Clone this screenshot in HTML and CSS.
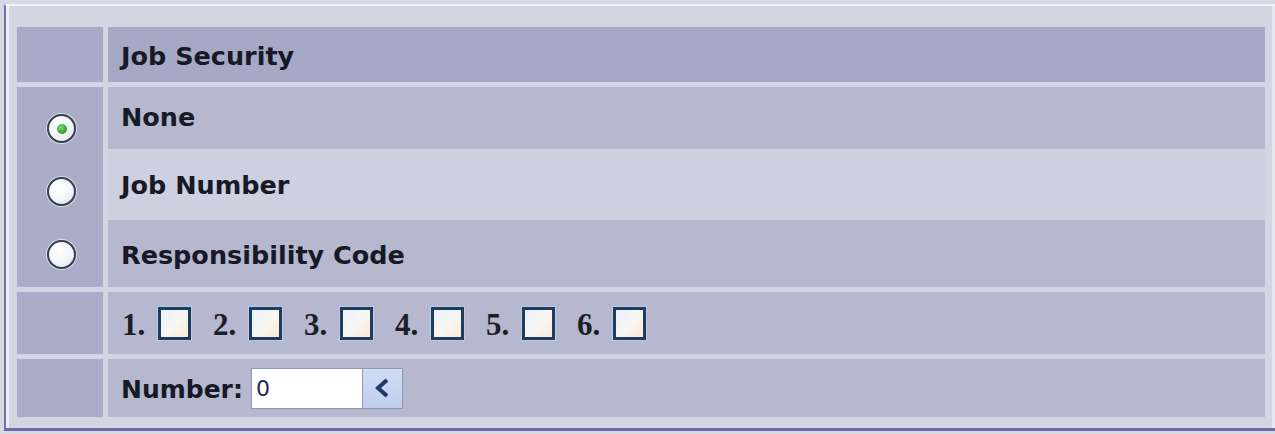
FILE: index.html
```html
<!DOCTYPE html>
<html>
<head>
<meta charset="utf-8">
<link rel="stylesheet" href="styles.css">
</head>
<body>
<div class="panel">
  <div class="grid">
    <div class="lc hdr-l"></div>
    <div class="rc hdr">Job Security</div>

    <div class="lc radios">
      <span class="radio checked"></span>
      <span class="radio"></span>
      <span class="radio"></span>
    </div>
    <div class="opts">
      <div class="opt dark r1">None</div>
      <div class="opt light r2">Job Number</div>
      <div class="opt dark r3">Responsibility Code</div>
    </div>

    <div class="lc"></div>
    <div class="rc boxes">
      <span class="item"><span class="num">1.</span><span class="box"></span></span>
      <span class="item"><span class="num">2.</span><span class="box"></span></span>
      <span class="item"><span class="num">3.</span><span class="box"></span></span>
      <span class="item"><span class="num">4.</span><span class="box"></span></span>
      <span class="item"><span class="num">5.</span><span class="box"></span></span>
      <span class="item"><span class="num">6.</span><span class="box"></span></span>
    </div>

    <div class="lc"></div>
    <div class="rc numrow">
      <span class="label">Number:</span>
      <span class="spin">
        <span class="field">0</span>
        <span class="btn"><svg width="20" height="22" viewBox="0 0 20 22"><polyline points="15,3 6,11 15,19" fill="none" stroke="#1f3a66" stroke-width="4" stroke-linejoin="miter"/></svg></span>
      </span>
    </div>
  </div>
</div>
</body>
</html>
```

FILE: styles.css
```css
html, body {
  margin: 0;
  padding: 0;
}
body {
  background: #d7d8e3;
  width: 1275px;
  height: 434px;
  overflow: hidden;
  font-family: "DejaVu Sans", Verdana, sans-serif;
  font-weight: bold;
  color: #181926;
}
.panel {
  margin: 4px 0 0 4px;
  border-top: 2px solid #f3f4fa;
  border-left: 2px solid #6d6db0;
  border-bottom: 3px solid #6a6ca6;
  box-shadow: inset 3px 0 0 #eef0f8, inset -3px 0 0 #e6e8f1;
  background: #d3d6e2;
  padding: 21px 10px 11px 11px;
  height: 390px;
}
.grid {
  display: grid;
  grid-template-columns: 86px 1fr;
  grid-template-rows: 55px 200px 62px 58px;
  gap: 5px;
}
.lc {
  background: #aaadc8;
}
.hdr-l {
  background: #a8abc7;
}
.rc {
  background: #b5b8ce;
  display: flex;
  align-items: center;
  padding-left: 13px;
  font-size: 25.5px;
}
.hdr {
  background: #a6a9c6;
  padding-top: 2px;
}
.radios {
  display: flex;
  flex-direction: column;
  align-items: center;
  padding-top: 27px;
  gap: 34px;
  padding-left: 3px;
}
.radio {
  box-sizing: border-box;
  width: 29px;
  height: 29px;
  border-radius: 50%;
  border: 2px solid #34424f;
  background: radial-gradient(circle at 40% 35%, #ffffff 0%, #f3f6fa 50%, #dde3ea 100%);
  box-shadow: 0 0 0 1px #d9deea;
  display: flex;
  align-items: center;
  justify-content: center;
}
.radio.checked::after {
  content: "";
  width: 10px;
  height: 10px;
  border-radius: 50%;
  background: radial-gradient(circle at 40% 35%, #7ee27a 0%, #2ea52e 60%, #1f7f22 100%);
}
.opts {
  display: flex;
  flex-direction: column;
}
.opt {
  display: flex;
  align-items: center;
  padding-left: 13px;
  font-size: 25.5px;
}
.opt.dark {
  background: #b5b8ce;
}
.opt.light {
  background: #cdd0de;
}
.r1 { height: 62px; padding-bottom: 2px; box-sizing: border-box; }
.r2 { height: 71px; padding-bottom: 0; box-sizing: border-box; }
.r3 { height: 67px; padding-top: 2px; box-sizing: border-box; }

.boxes {
  gap: 22px;
  padding-left: 14px;
}
.item {
  display: flex;
  align-items: center;
  gap: 11px;
}
.num {
  font-family: "Liberation Serif", "Times New Roman", serif;
  font-weight: bold;
  font-size: 31px;
  color: #1d1d24;
  width: 25px;
  padding-top: 4px;
}
.box {
  box-sizing: border-box;
  width: 33px;
  height: 33px;
  border: 3px solid #1f3c5e;
  background: linear-gradient(135deg, #e9f2fc 0%, #f8f6f2 55%, #fbe8d6 100%);
  box-shadow: 0 0 0 1px #b9cbe8;
  margin-top: 1px;
}
.numrow {
  gap: 8px;
  padding-left: 13px;
}
.label {
  font-size: 25px;
  padding-top: 2px;
}
.spin {
  display: flex;
  height: 41px;
  box-sizing: border-box;
  border: 1px solid #8d99b3;
  background: #ffffff;
}
.field {
  width: 106px;
  font-family: "DejaVu Sans", sans-serif;
  font-weight: normal;
  font-size: 22px;
  color: #1a2a58;
  padding-left: 4px;
  display: flex;
  align-items: center;
  border-right: 1px solid #8d99b3;
}
.btn {
  width: 39px;
  background: linear-gradient(180deg, #d0dcf3 0%, #c0cfee 100%);
  display: flex;
  align-items: center;
  justify-content: center;
}
```
